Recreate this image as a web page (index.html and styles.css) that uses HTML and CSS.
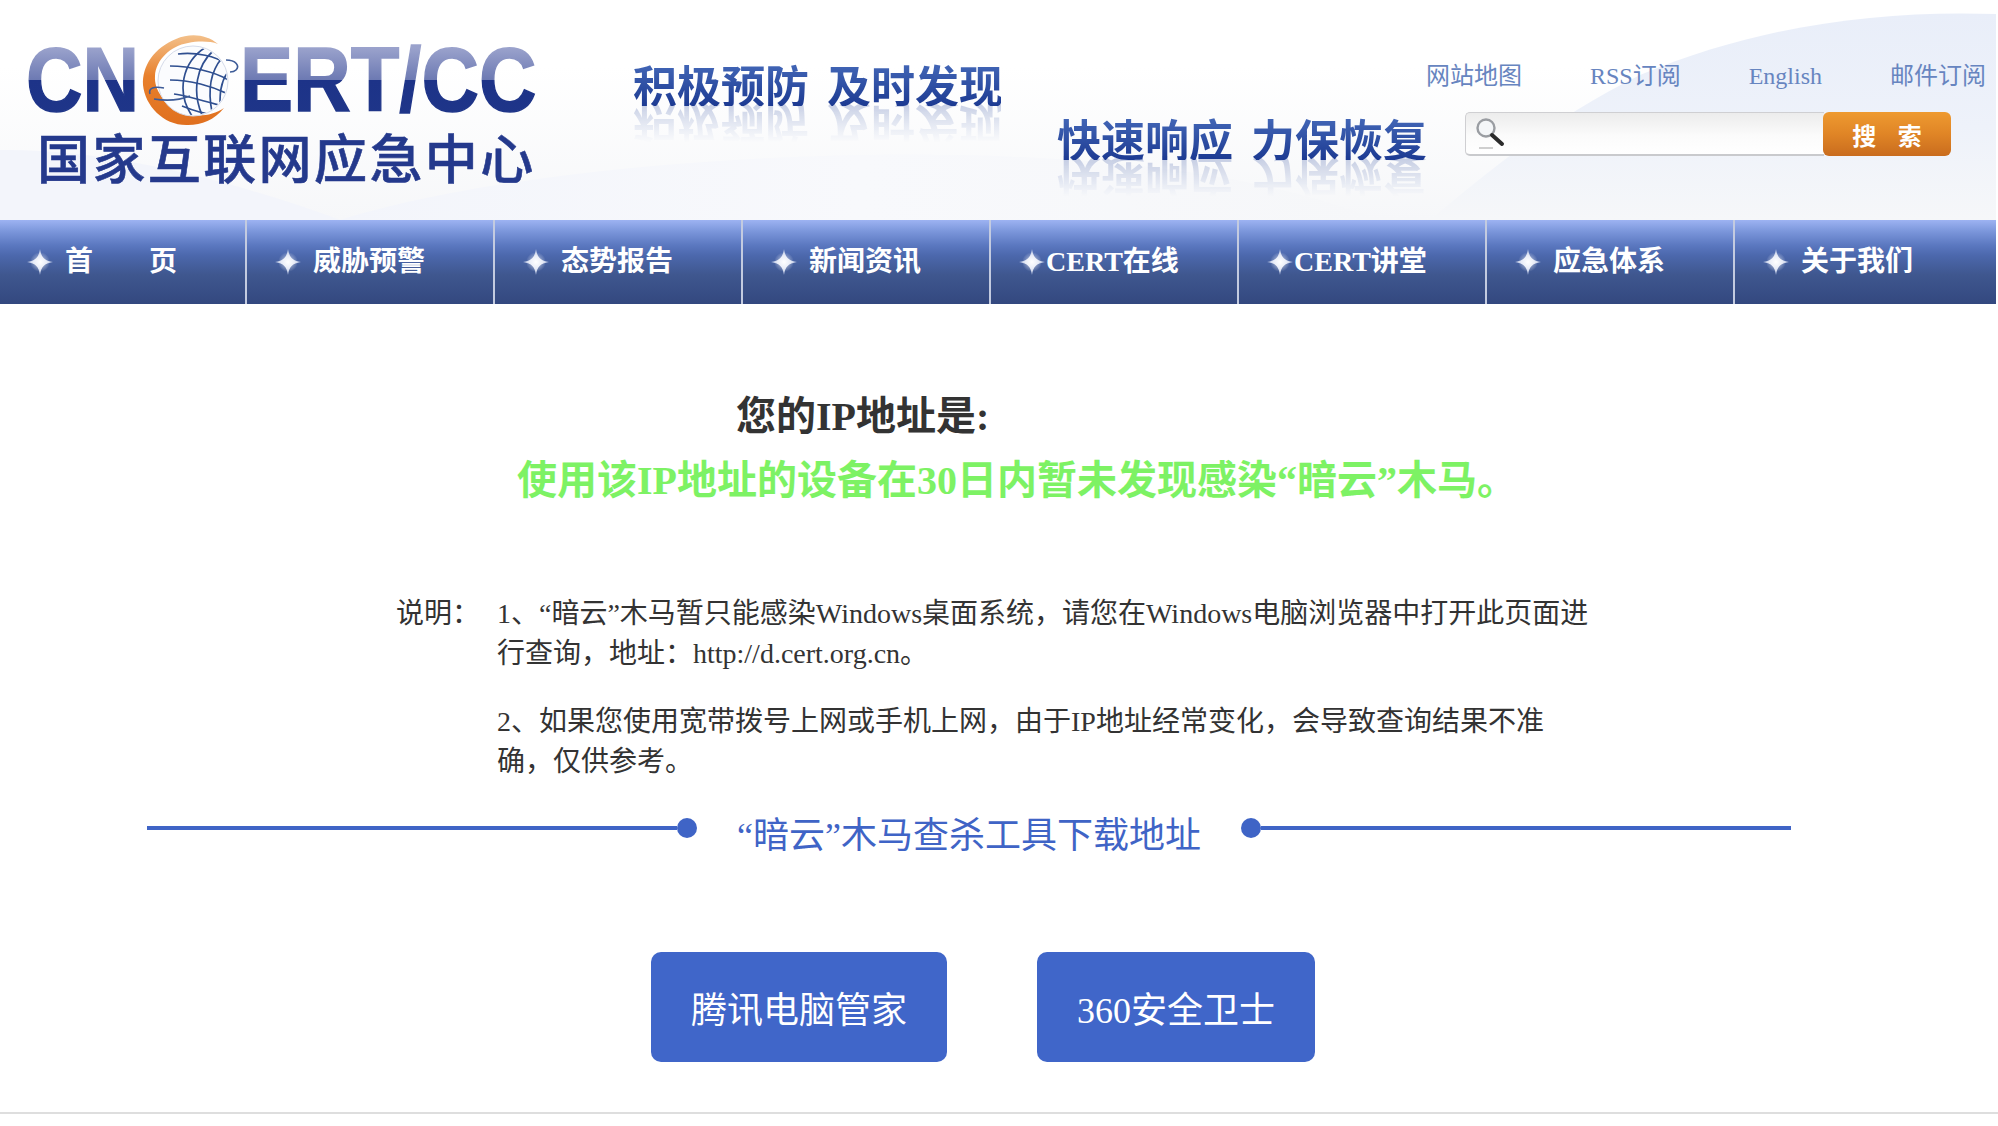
FILE: index.html
```html
<!DOCTYPE html>
<html lang="zh-CN">
<head>
<meta charset="utf-8">
<title>国家互联网应急中心</title>
<link rel="stylesheet" href="styles.css">
</head>
<body>
<svg class="defs" width="0" height="0" aria-hidden="true">
  <defs>
    <radialGradient id="starFill" cx="50%" cy="50%" r="50%">
      <stop offset="0" stop-color="#ffffff"/>
      <stop offset="0.5" stop-color="#e8ecf7"/>
      <stop offset="1" stop-color="#a8b7dc"/>
    </radialGradient>
    <radialGradient id="starGlow" cx="50%" cy="50%" r="50%">
      <stop offset="0" stop-color="#ffffff" stop-opacity="0.75"/>
      <stop offset="1" stop-color="#ffffff" stop-opacity="0"/>
    </radialGradient>
    <symbol id="star" viewBox="0 0 26 26">
      <circle cx="13" cy="13" r="10" fill="url(#starGlow)"/>
      <path d="M13 0C14.5 8.5 17 11.5 26 13C17 14.5 14.5 17.5 13 26C11.5 17.5 9 14.5 0 13C9 11.5 11.5 8.5 13 0Z" fill="url(#starFill)"/>
    </symbol>
  </defs>
</svg>
<header class="header">
  <svg class="header-bg" viewBox="0 0 1996 220" preserveAspectRatio="none" aria-hidden="true">
    <defs>
      <linearGradient id="swoosh" x1="0" y1="0" x2="0" y2="1">
        <stop offset="0" stop-color="#e9eef9"/>
        <stop offset="0.55" stop-color="#eef2fa"/>
        <stop offset="1" stop-color="#f6f7f9"/>
      </linearGradient>
      <linearGradient id="waveLow" x1="0" y1="0" x2="1" y2="0">
        <stop offset="0" stop-color="#f3f5fb"/>
        <stop offset="0.5" stop-color="#f8f9fc"/>
        <stop offset="1" stop-color="#f6f7f9"/>
      </linearGradient>
    </defs>
    <path d="M0 150C120 148 260 190 340 220L0 220Z" fill="#f3f5fb"/>
    <path d="M340 220C500 170 800 145 1040 158C1200 166 1300 190 1380 220Z" fill="url(#waveLow)"/>
    <path d="M1430 220C1490 170 1550 120 1640 75C1760 25 1880 10 1996 14L1996 220Z" fill="url(#swoosh)"/>
  </svg>
  <a class="logo">
    <div class="logo-mark">
      <span class="logo-cn">CN</span>
      <svg class="globe" viewBox="0 0 105 100" aria-hidden="true">
        <defs>
          <linearGradient id="ring" x1="0" y1="0" x2="0" y2="1">
            <stop offset="0" stop-color="#f3c08a"/>
            <stop offset="0.45" stop-color="#e8802c"/>
            <stop offset="1" stop-color="#e0701f"/>
          </linearGradient>
          <clipPath id="ball"><circle cx="53" cy="51" r="34"/></clipPath>
        </defs>
        <path d="M78 14C66 4 50 3 36 9C14 18 2 36 3 55C5 76 24 96 48 95C62 95 74 90 84 78C72 86 56 88 42 82C24 74 14 60 15 46C16 30 30 16 48 13C58 11 70 11 78 14Z" fill="url(#ring)"/>
        <circle cx="53" cy="51" r="35" fill="#fbfcfe" stroke="#d5dbe9"/>
        <g clip-path="url(#ball)" fill="none" stroke="#2f4f90" stroke-width="1.7">
          <path d="M66 17C42 32 36 62 52 86"/>
          <path d="M74 20C56 36 52 62 62 85"/>
          <path d="M82 28C70 42 68 62 72 82"/>
          <path d="M88 42C80 52 80 66 80 74"/>
          <path d="M38 24C56 22 76 26 86 34"/>
          <path d="M30 36C50 36 76 42 88 50"/>
          <path d="M30 50C50 50 72 56 88 64"/>
          <path d="M34 64C48 66 68 72 82 76"/>
          <path d="M42 76C52 80 62 84 72 84"/>
        </g>
        <path d="M10 64C8 58 14 56 24 58M14 69C26 71 40 70 50 66" fill="none" stroke="#3e5c98" stroke-width="1.6"/>
        <path d="M86 30C96 30 100 36 96 40C94 42 92 42 90 42" fill="none" stroke="#3e5c98" stroke-width="1.6"/>
      </svg>
      <span class="logo-ert">ERT/CC</span>
    </div>
    <div class="logo-name">国家互联网应急中心</div>
  </a>
  <div class="slogan slogan-first">积极预防 及时发现</div>
  <div class="slogan slogan-second">快速响应 力保恢复</div>
  <div class="tools">
    <nav class="top-links">
      <a>网站地图</a>
      <a>RSS订阅</a>
      <a>English</a>
      <a>邮件订阅</a>
    </nav>
    <form class="search">
      <svg class="search-icon" viewBox="0 0 36 36" aria-hidden="true">
        <circle cx="14" cy="13" r="8.5" fill="#f4f6f8" stroke="#9a9da2" stroke-width="2.4"/>
        <path d="M20 20L30 29" stroke="#2b2b2b" stroke-width="4" stroke-linecap="round"/>
        <path d="M7 33H21" stroke="#cfcfcf" stroke-width="2"/>
      </svg>
      <input class="search-input" type="text" aria-label="搜索">
      <button class="search-button" type="button">搜 索</button>
    </form>
  </div>
</header>
<nav class="nav">
  <a class="nav-item nav-first"><svg class="nav-star"><use href="#star"/></svg><span>首&emsp;&emsp;页</span></a>
  <a class="nav-item"><svg class="nav-star"><use href="#star"/></svg><span>威胁预警</span></a>
  <a class="nav-item"><svg class="nav-star"><use href="#star"/></svg><span>态势报告</span></a>
  <a class="nav-item"><svg class="nav-star"><use href="#star"/></svg><span>新闻资讯</span></a>
  <a class="nav-item nav-tight"><svg class="nav-star"><use href="#star"/></svg><span>CERT在线</span></a>
  <a class="nav-item nav-tight"><svg class="nav-star"><use href="#star"/></svg><span>CERT讲堂</span></a>
  <a class="nav-item"><svg class="nav-star"><use href="#star"/></svg><span>应急体系</span></a>
  <a class="nav-item nav-last"><svg class="nav-star"><use href="#star"/></svg><span>关于我们</span></a>
</nav>
<main class="main">
  <h1 class="ip-title">您的IP地址是:</h1>
  <p class="ip-result">使用该IP地址的设备在30日内暂未发现感染“暗云”木马。</p>
  <section class="notes">
    <div class="notes-label">说明&#xFF1A;</div>
    <div class="notes-body">
      <p>1、“暗云”木马暂只能感染Windows桌面系统&#xFF0C;请您在Windows电脑浏览器中打开此页面进行查询&#xFF0C;地址&#xFF1A;http://d.cert.org.cn。</p>
      <p>2、如果您使用宽带拨号上网或手机上网&#xFF0C;由于IP地址经常变化&#xFF0C;会导致查询结果不准确&#xFF0C;仅供参考。</p>
    </div>
  </section>
  <div class="divider">
    <span class="divider-line"></span>
    <span class="divider-dot"></span>
    <h2 class="divider-text">“暗云”木马查杀工具下载地址</h2>
    <span class="divider-dot"></span>
    <span class="divider-line"></span>
  </div>
  <div class="downloads">
    <a class="download download-tencent">腾讯电脑管家</a>
    <a class="download download-360">360安全卫士</a>
  </div>
</main>
<footer class="footer"></footer>
</body>
</html>
```
FILE: styles.css
```css
* { box-sizing: border-box; }
html, body { margin: 0; padding: 0; background: #fff; }
body {
  font-family: "Liberation Serif", "Noto Sans CJK SC", serif;
  color: #333;
  overflow: hidden;
}
.defs { position: absolute; }

/* header */
.header {
  position: relative;
  width: 1996px;
  height: 220px;
  display: flex;
  align-items: flex-start;
  padding-left: 28px;
  background: linear-gradient(#ffffff 0, #ffffff 30%, #f6f7f9 100%);
}
.header-bg { position: absolute; inset: 0; width: 100%; height: 100%; }
.logo, .slogan, .tools { position: relative; }

.logo { display: block; width: 605px; margin-top: 30px; }
.logo-mark { display: flex; height: 100px; margin-left: -2px; }
.logo-cn, .logo-ert {
  display: block;
  font-family: "Liberation Sans", sans-serif;
  font-weight: 700;
  font-size: 90px;
  line-height: 100px;
  white-space: nowrap;
  transform-origin: left center;
  background: linear-gradient(#9aa2cc 0, #9aa2cc 18%, #6d7ab3 49.5%, #1d3388 50%, #1f3689 100%);
  -webkit-background-clip: text;
  background-clip: text;
  color: transparent;
  -webkit-text-stroke: 1.5px transparent;
}
.logo-cn { width: 130px; margin-right: -16px; transform: scaleX(.87); }
.logo-ert { width: 338px; margin-left: -5px; transform: scaleX(.885); }
.globe { display: block; width: 105px; height: 100px; flex: none; margin-left: 0; }
.logo-name {
  margin: 0 0 0 9px;
  font-family: "Noto Sans CJK SC", sans-serif;
  font-weight: 500;
  font-size: 53px;
  line-height: 52px;
  letter-spacing: 2.4px;
  color: #24398c;
  -webkit-text-stroke: .6px #24398c;
  white-space: nowrap;
}

.slogan {
  font-family: "Noto Sans CJK SC", sans-serif;
  font-weight: 700;
  font-size: 44px;
  line-height: 44px;
  word-spacing: 8px;
  white-space: nowrap;
  background: linear-gradient(#4468b8, #1c3a92);
  -webkit-background-clip: text;
  background-clip: text;
  color: transparent;
  -webkit-box-reflect: below -4px linear-gradient(transparent 8%, rgba(255,255,255,.25));
}
.slogan-first { width: 368px; margin-top: 62px; }
.slogan-second { width: 369px; margin: 116px 0 0 56px; }

.tools { width: 570px; margin-top: 62px; }
.top-links { display: flex; font-size: 24px; line-height: 28px; color: #6785c0; }
.top-links a:nth-child(n+2) { margin-left: 68px; }
.search {
  display: flex;
  width: 486px;
  height: 44px;
  margin: 22px 0 0 39px;
}
.search-icon { display: block; width: 36px; height: 36px; flex: none; margin: 3px 0 0 7px; position: absolute; }
.search-input {
  flex: 1;
  min-width: 0;
  border: 1px solid #cfcfd2;
  border-right: 0;
  border-bottom: 2px solid #c9cacd;
  border-radius: 5px 0 0 5px;
  background: linear-gradient(#ececec, #fbfbfb 55%, #fff);
}
.search-button {
  flex: none;
  width: 128px;
  border: 0;
  border-radius: 6px;
  margin-left: -1px;
  padding: 0;
  font-family: "Noto Sans CJK SC", sans-serif;
  font-weight: 700;
  font-size: 24px;
  word-spacing: 16px;
  color: #fff;
  background: linear-gradient(#ee9a30, #e08526 50%, #c96c1e);
}

/* nav */
.nav {
  display: flex;
  width: 1996px;
  height: 84px;
  background: linear-gradient(#9db3f2 0, #7a95da 14%, #5b78c0 30%, #4c68ad 42%, #3f578f 65%, #33487f 100%);
}
.nav-item {
  display: flex;
  align-items: center;
  flex: none;
  width: 248px;
  padding: 0 0 0 28px;
  border-right: 2px solid #c3cbe0;
  color: #fff;
  font-weight: 700;
  font-size: 28px;
  line-height: 84px;
  white-space: nowrap;
}
.nav-first { width: 247px; padding-left: 27px; }
.nav-last { flex: 1; border-right: 0; }
.nav-star { display: block; width: 26px; height: 26px; flex: none; margin-right: 12px; }
.nav-tight .nav-star { margin-right: 1px; }

/* main */
.ip-title {
  margin: 81px 0 0 736px;
  font-size: 40px;
  line-height: 64px;
  font-weight: 700;
  color: #333;
}
.ip-result {
  margin: 0 0 0 517px;
  font-size: 40px;
  line-height: 64px;
  font-weight: 700;
  color: #7df264;
}
.notes { display: flex; margin: 81px 0 0 396px; font-size: 28px; line-height: 40px; color: #333; }
.notes-label { width: 101px; flex: none; }
.notes-body { width: 1095px; }
.notes-body p { margin: 0 0 28px; }
.notes-body p:last-child { margin-bottom: 0; }

.divider { display: flex; align-items: center; width: 1644px; margin: 13px 0 0 147px; }
.divider-line { flex: 1; height: 4px; background: #3f64c6; }
.divider-dot { flex: none; width: 20px; height: 20px; border-radius: 50%; background: #3f64c6; }
.divider-text {
  margin: 0 40px;
  padding-top: 16px;
  font-size: 36px;
  line-height: 50px;
  font-weight: 400;
  color: #3f64c6;
  white-space: nowrap;
}

.downloads { display: flex; gap: 90px; margin: 91px 0 0 651px; }
.download {
  display: flex;
  align-items: center;
  justify-content: center;
  height: 110px;
  border-radius: 10px;
  background: #4066c9;
  color: #fff;
  font-size: 36px;
}
.download-tencent { width: 296px; }
.download-360 { width: 278px; }

.footer { height: 2px; margin-top: 50px; background: #dedede; }
```
